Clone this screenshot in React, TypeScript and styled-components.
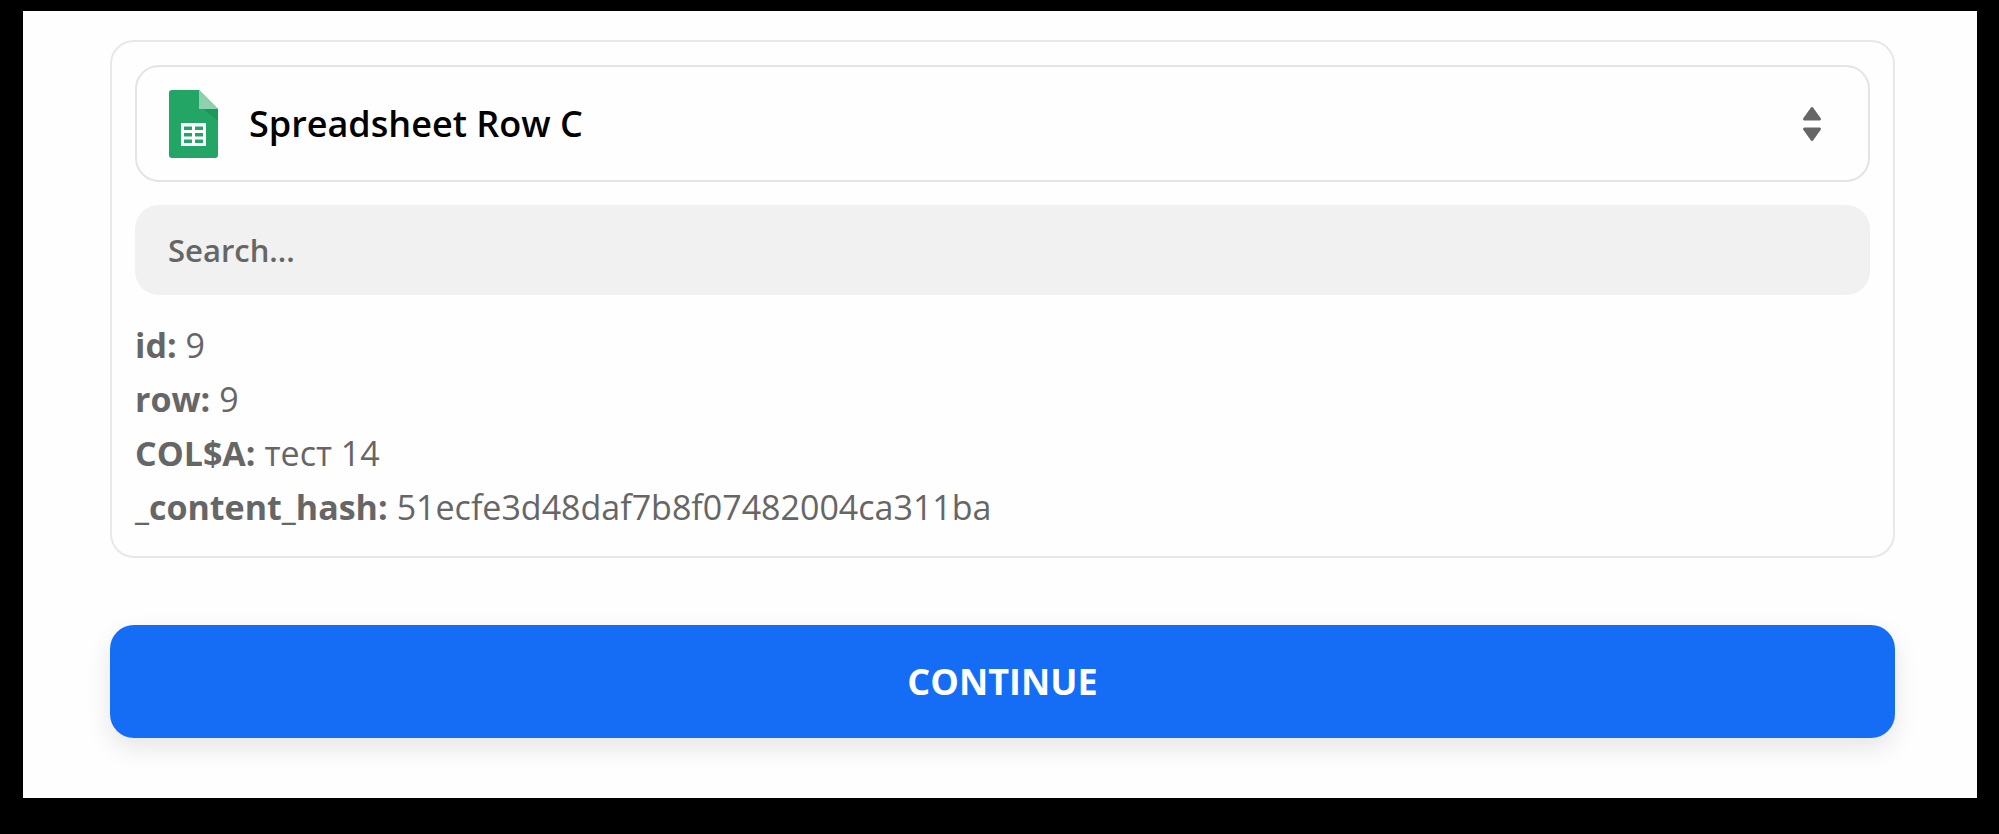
import React, { useState } from "react";
import styled, { createGlobalStyle } from "styled-components";

const GlobalStyle = createGlobalStyle`
  *, *::before, *::after { box-sizing: border-box; }
  body {
    margin: 0;
    background: #000;
    font-family: "Open Sans", "Noto Sans", sans-serif;
    color: #666;
  }
`;

const Page = styled.div`
  min-height: 100vh;
  padding: 11px 22px 35px 23px;
  background: #000;
`;

const Panel = styled.form`
  display: flex;
  flex-direction: column;
  gap: 67px;
  padding: 29px 82px 60px 87px;
  background: #fefefe;
`;

const Card = styled.section`
  display: flex;
  flex-direction: column;
  gap: 23px;
  padding: 23px 23px 22px;
  border: 2px solid #e8e8e8;
  border-radius: 24px;
`;

const Picker = styled.div`
  display: grid;
  grid-template-columns: 110px 1fr 84px;
  align-items: center;
  height: 117px;
  border: 2px solid #e4e4e4;
  border-radius: 24px;
`;

const PickerSelect = styled.select`
  grid-area: 1 / 1 / 2 / 4;
  width: 100%;
  height: 100%;
  padding: 0 84px 0 112px;
  border: 0;
  border-radius: 22px;
  appearance: none;
  background: transparent;
  color: #000;
  font: 600 36px/48px "Open Sans", "Noto Sans", sans-serif;
`;

const SheetIcon = styled.svg`
  grid-area: 1 / 1;
  width: 49px;
  height: 68px;
  margin-left: 32px;
  pointer-events: none;
`;

const SortIcon = styled.svg`
  grid-area: 1 / 3;
  justify-self: start;
  width: 20px;
  height: 36px;
  margin-left: 18px;
  pointer-events: none;
`;

const SearchInput = styled.input`
  width: 100%;
  height: 90px;
  padding: 0 33px;
  border: 0;
  border-radius: 24px;
  background: #f1f1f1;
  color: #666;
  font: 600 31px/44px "Open Sans", "Noto Sans", sans-serif;

  &::placeholder {
    color: #666;
    opacity: 1;
  }
`;

const Fields = styled.dl`
  margin: 0;
  font-size: 34px;
  line-height: 54px;
`;

const Field = styled.div`
  display: flex;
  gap: 9px;
`;

const FieldName = styled.dt`
  font-weight: 700;
`;

const FieldValue = styled.dd`
  margin: 0;
`;

const ContinueButton = styled.button`
  height: 113px;
  border: 0;
  border-radius: 24px;
  background: #156df5;
  box-shadow: 0 10px 26px rgba(0, 0, 0, 0.1);
  color: #fff;
  font: 700 36px/48px "Open Sans", "Noto Sans", sans-serif;
  cursor: pointer;
`;

const fields = [
  { name: "id", value: "9" },
  { name: "row", value: "9" },
  { name: "COL$A", value: "тест 14" },
  { name: "_content_hash", value: "51ecfe3d48daf7b8f07482004ca311ba" },
];

export default function App() {
  const [query, setQuery] = useState("");

  return (
    <>
      <GlobalStyle />
      <Page>
        <Panel onSubmit={(event: React.FormEvent) => event.preventDefault()}>
          <Card>
            <Picker>
              <PickerSelect aria-label="Sample row" defaultValue="c">
                <option value="c">Spreadsheet Row C</option>
              </PickerSelect>
              <SheetIcon viewBox="0 0 49 68" aria-hidden="true">
                <path d="M3 0H30L49 19V65a3 3 0 0 1-3 3H3a3 3 0 0 1-3-3V3a3 3 0 0 1 3-3Z" fill="#23a566" />
                <path d="M33 18L49 31V19Z" fill="#1c9659" />
                <path d="M30 0L49 19H30Z" fill="#8ed1b1" />
                <path
                  fillRule="evenodd"
                  d="M12 33H37V56H12ZM15 36.500V40H23V36.500ZM26 36.500V40H34V36.500ZM15 43V46.500H23V43ZM26 43V46.500H34V43ZM15 49.500V53H23V49.500ZM26 49.500V53H34V49.500Z"
                  fill="#fff"
                />
              </SheetIcon>
              <SortIcon viewBox="0 0 20 36" aria-hidden="true">
                <g fill="#666" stroke="#666" strokeWidth="3" strokeLinejoin="round">
                  <path d="M10 2.500L17.500 13H2.500Z" />
                  <path d="M10 33.500L17.500 23H2.500Z" />
                </g>
              </SortIcon>
            </Picker>
            <SearchInput
              type="text"
              aria-label="Search"
              placeholder="Search..."
              value={query}
              onChange={(event) => setQuery(event.target.value)}
            />
            <Fields>
              {fields.map((field) => (
                <Field key={field.name}>
                  <FieldName>{field.name}:</FieldName>
                  <FieldValue>{field.value}</FieldValue>
                </Field>
              ))}
            </Fields>
          </Card>
          <ContinueButton type="submit">CONTINUE</ContinueButton>
        </Panel>
      </Page>
    </>
  );
}
